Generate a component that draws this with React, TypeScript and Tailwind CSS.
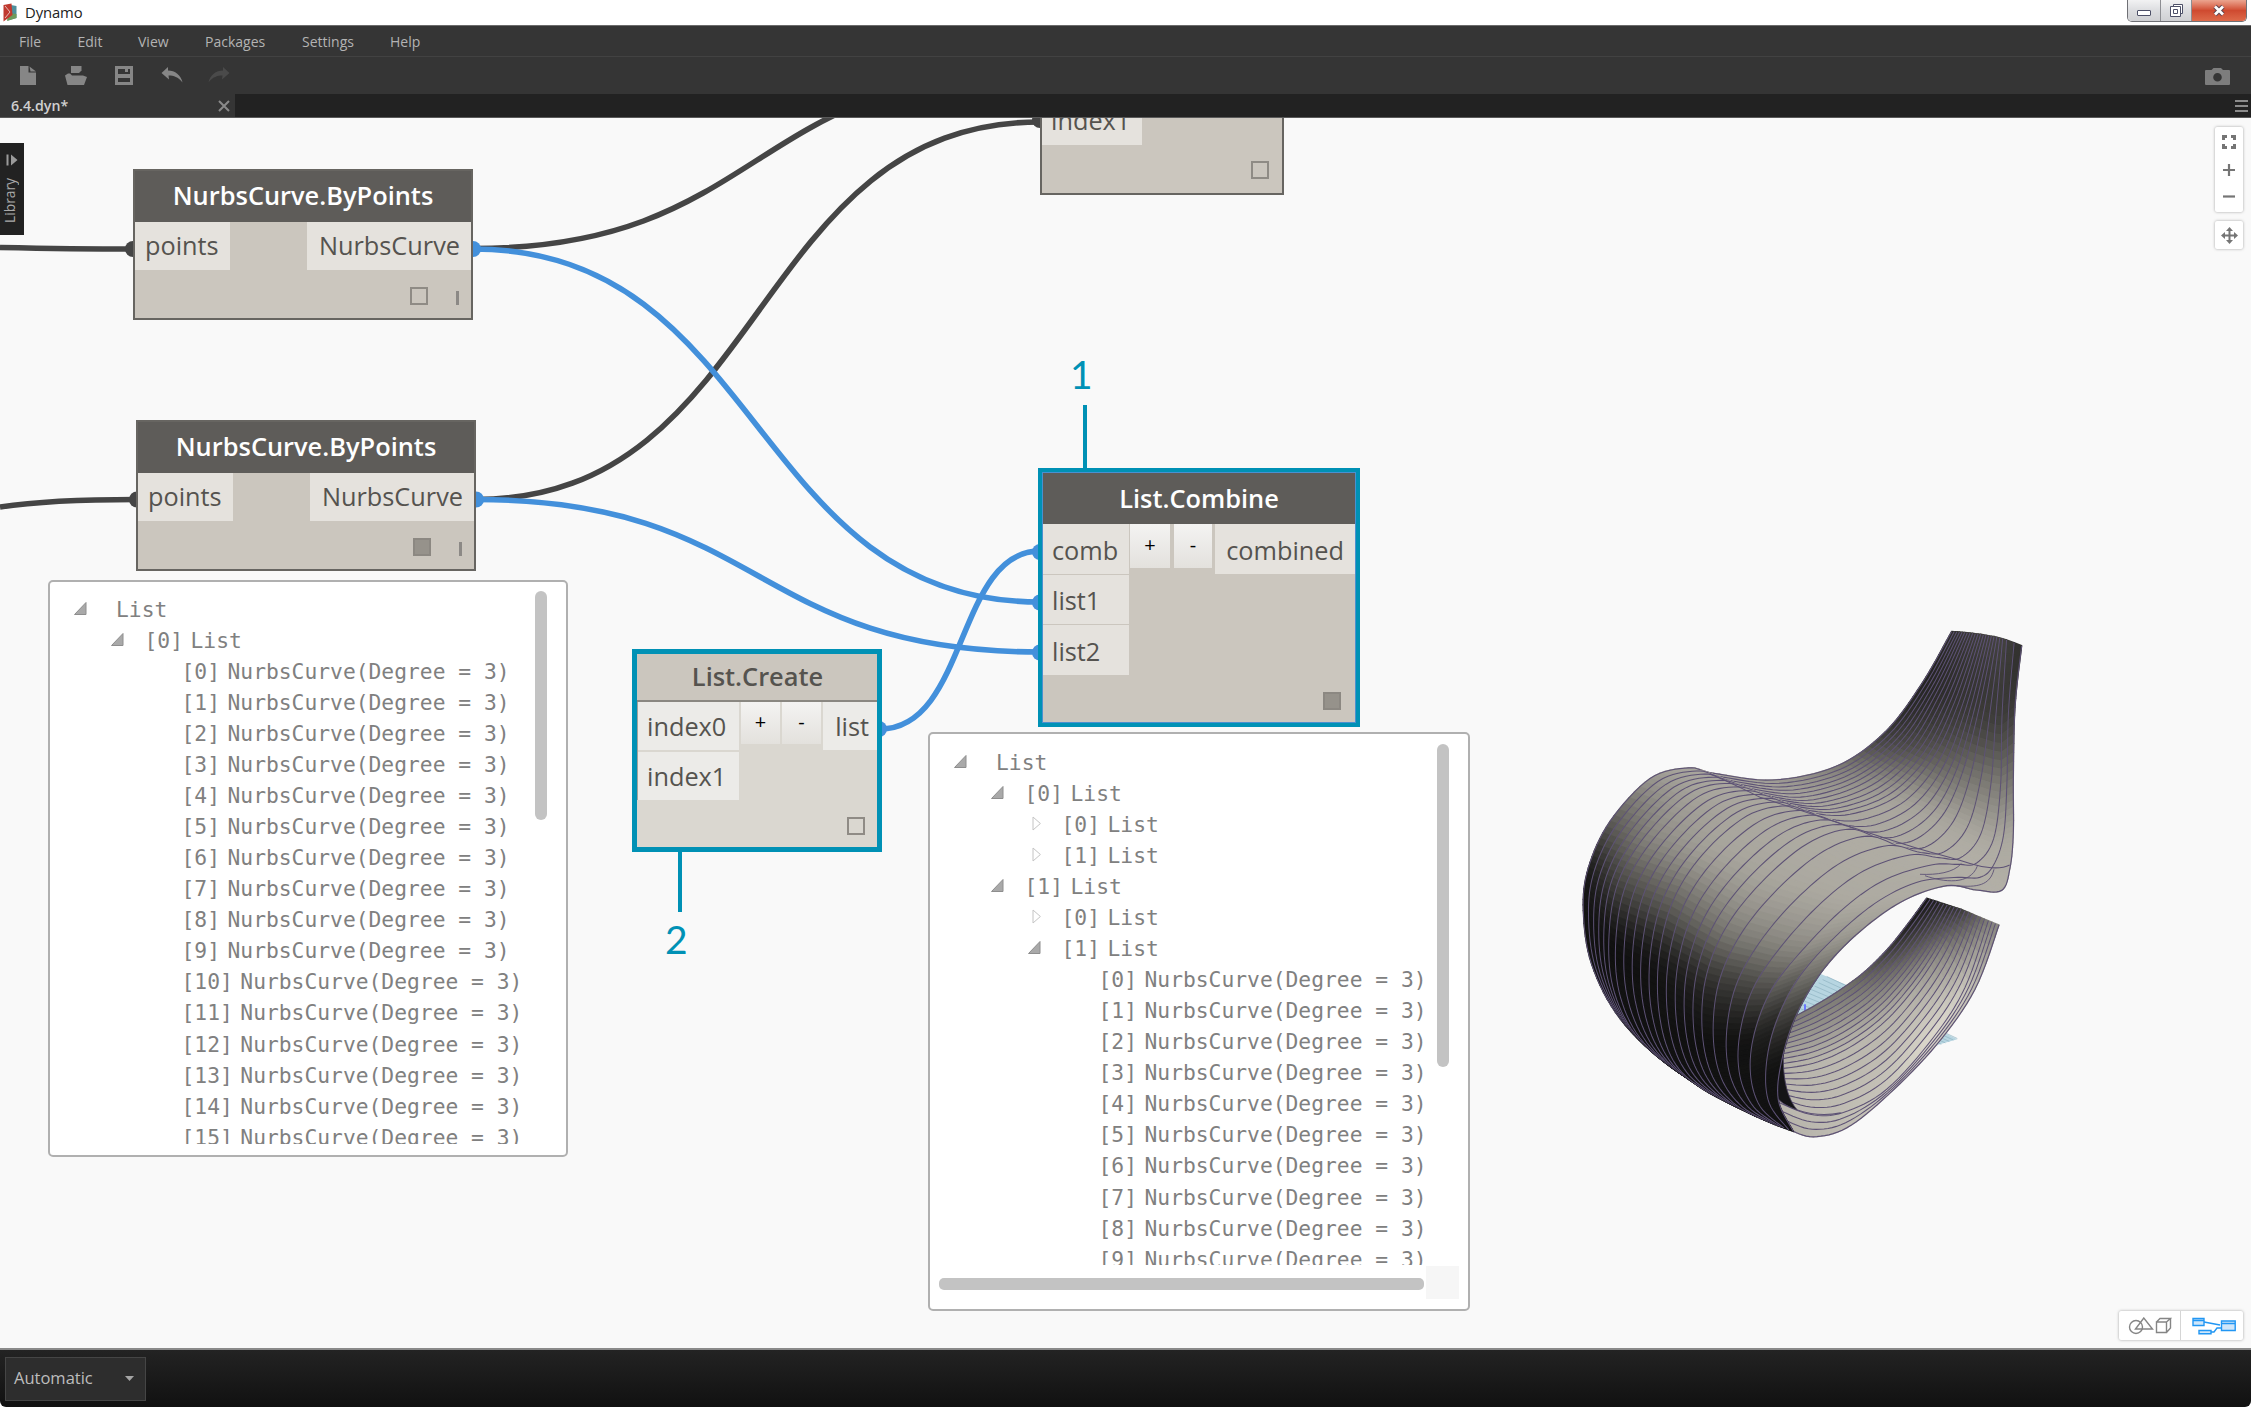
import React from "react";

type Pt = [number, number];
type ShadePt = [number, number, number];
type KeyCurve = { u: number; pts: ShadePt[] };

/* ---------- curved surface preview ---------- */

const OUTER: KeyCurve[] = [
  { u: 0, pts: [[1175, 88, 0.15], [1085, 235, 0.1], [975, 370, 0.2], [830, 465, 0.5], [640, 504, 0.64], [460, 485, 0.7], [385, 470, 0.7], [270, 500, 0.62], [150, 620, 0.34], [85, 750, 0.06], [70, 870, 0.03], [95, 1020, 0.03], [180, 1172, 0.03], [330, 1306, 0.03], [520, 1412, 0.03]] },
  { u: 0.25, pts: [[1218, 91, 0.2], [1135, 260, 0.14], [1040, 405, 0.28], [910, 505, 0.58], [750, 555, 0.68], [620, 545, 0.7], [520, 518, 0.7], [400, 545, 0.68], [270, 660, 0.55], [185, 790, 0.28], [155, 940, 0.03], [165, 1090, 0.02], [230, 1220, 0.02], [360, 1325, 0.02], [550, 1425, 0.02]] },
  { u: 0.5, pts: [[1262, 96, 0.22], [1195, 290, 0.18], [1120, 440, 0.36], [1010, 550, 0.66], [870, 600, 0.7], [760, 597, 0.7], [680, 576, 0.7], [560, 605, 0.7], [430, 710, 0.66], [340, 840, 0.4], [297, 1000, 0.06], [298, 1160, 0.02], [340, 1290, 0.02], [430, 1370, 0.02], [600, 1450, 0.02]] },
  { u: 0.75, pts: [[1306, 103, 0.24], [1262, 310, 0.2], [1215, 490, 0.46], [1160, 610, 0.68], [1080, 680, 0.72], [1000, 685, 0.72], [890, 648, 0.72], [760, 690, 0.72], [620, 800, 0.68], [510, 930, 0.5], [450, 1070, 0.16], [440, 1220, 0.02], [470, 1340, 0.02], [540, 1420, 0.02], [640, 1467, 0.02]] },
  { u: 0.9, pts: [[1335, 110, 0.24], [1322, 330, 0.22], [1318, 520, 0.5], [1295, 670, 0.7], [1240, 735, 0.74], [1180, 733, 0.74], [1100, 735, 0.73], [960, 780, 0.72], [840, 860, 0.7], [715, 980, 0.56], [620, 1095, 0.3], [570, 1220, 0.04], [562, 1330, 0.02], [595, 1420, 0.02], [670, 1478, 0.02]] },
  { u: 1, pts: [[1385, 128, 0.14], [1365, 300, 0.2], [1360, 500, 0.46], [1360, 650, 0.68], [1350, 750, 0.72], [1325, 813, 0.74], [1250, 812, 0.74], [1160, 800, 0.73], [1030, 842, 0.72], [900, 928, 0.66], [790, 1035, 0.5], [710, 1160, 0.26], [665, 1290, 0.04], [655, 1400, 0.02], [700, 1488, 0.02]] },
];

const INNER: KeyCurve[] = [
  { u: 0, pts: [[680, 1178, 0.5], [760, 1138, 0.5], [840, 1092, 0.46], [915, 1040, 0.36], [985, 975, 0.2], [1045, 905, 0.08], [1100, 835, 0.05]] },
  { u: 0.5, pts: [[640, 1315, 0.76], [760, 1297, 0.77], [870, 1252, 0.78], [975, 1180, 0.76], [1065, 1085, 0.7], [1140, 980, 0.52], [1203, 866, 0.2]] },
  { u: 0.85, pts: [[640, 1400, 0.78], [750, 1440, 0.79], [850, 1435, 0.8], [980, 1370, 0.84], [1120, 1225, 0.93], [1215, 1085, 0.84], [1285, 898, 0.5]] },
  { u: 1, pts: [[690, 1484, 0.74], [760, 1503, 0.77], [860, 1478, 0.8], [985, 1385, 0.84], [1130, 1245, 0.86], [1245, 1090, 0.78], [1317, 910, 0.56]] },
];

function curveAt(keys: KeyCurve[], u: number): ShadePt[] {
  let k = 0;
  while (k < keys.length - 2 && u > keys[k + 1].u) k++;
  const a = keys[k];
  const b = keys[k + 1];
  const t = (u - a.u) / (b.u - a.u);
  return a.pts.map((p, i) => p.map((v, j) => v + (b.pts[i][j] - v) * t) as ShadePt);
}

function sample(pts: ShadePt[], per: number): ShadePt[] {
  const out: ShadePt[] = [];
  for (let i = 0; i < pts.length - 1; i++) {
    const p0 = pts[Math.max(0, i - 1)];
    const p1 = pts[i];
    const p2 = pts[i + 1];
    const p3 = pts[Math.min(pts.length - 1, i + 2)];
    for (let s = 0; s < per; s++) {
      const t = s / per;
      out.push(
        [0, 1, 2].map(
          (j) =>
            0.5 *
            (2 * p1[j] +
              (p2[j] - p0[j]) * t +
              (2 * p0[j] - 5 * p1[j] + 4 * p2[j] - p3[j]) * t * t +
              (3 * p1[j] - p0[j] - 3 * p2[j] + p3[j]) * t * t * t),
        ) as ShadePt,
      );
    }
  }
  out.push(pts[pts.length - 1]);
  return out;
}

const tone = (s: number) => {
  const c = Math.max(0, Math.min(1, s));
  return `rgb(${Math.round(14 + 222 * c)},${Math.round(14 + 218 * c)},${Math.round(14 + 206 * c)})`;
};

const line = (pts: (Pt | ShadePt)[]) =>
  "M" + pts.map((p) => `${p[0].toFixed(1)} ${p[1].toFixed(1)}`).join("L");

function Surface({ keys, count, per }: { keys: KeyCurve[]; count: number; per: number }) {
  const curves = Array.from({ length: count + 1 }, (_, i) => sample(curveAt(keys, i / count), per));
  return (
    <g>
      {curves.map((c, i) => (
        <g key={i}>
          {i > 0 &&
            c.slice(1).map((p, j) => {
              const a = curves[i - 1][j];
              const b = curves[i - 1][j + 1];
              const d = c[j];
              const f = tone((a[2] + b[2] + p[2] + d[2]) / 4);
              return (
                <path key={j} d={line([a, b, p, d]) + "Z"} fill={f} stroke={f} strokeWidth={4} strokeLinejoin="round" />
              );
            })}
          {i > 0 && <path d={line(curves[i - 1])} fill="none" stroke="#5d5275" strokeWidth={3} />}
        </g>
      ))}
      <path d={line(curves[count])} fill="none" stroke="#5d5275" strokeWidth={3.4} />
    </g>
  );
}

function ChairModel() {
  return (
    <svg className="absolute left-[1560px] top-[482px] h-[560px] w-[500px]" viewBox="0 0 1500 1568" preserveAspectRatio="none">
      <path d="M760 1038L860 1078L1192 1230L1000 1282L640 1200Z" fill="#b7d5e1" />
      {Array.from({ length: 17 }, (_, i) => (
        <path key={i} d={`M${800 - i * 12} ${1054 + i * 9}L${1192 - i * 12} ${1228 + i * 4}`} stroke="#8fb3c2" strokeWidth={2} />
      ))}
      <path d="M735 1132V1156" stroke="#6a78ff" strokeWidth={6} />
      <Surface keys={INNER} count={20} per={8} />
      <path d="M668 1230C650 1300 648 1360 650 1392C666 1412 690 1420 712 1428C680 1395 664 1330 672 1240Z" fill="#141416" stroke="#4a4160" strokeWidth={2.5} />
      <path d="M712 1428C750 1440 800 1444 842 1436" fill="none" stroke="#5d5275" strokeWidth={3} />
      <Surface keys={OUTER} count={22} per={8} />
      <path d="M450 487C500 505 550 530 600 552C760 600 900 645 1040 686C1120 710 1180 722 1230 738C1270 750 1320 756 1349 742" fill="none" stroke="#5d5275" strokeWidth={3} />
      <path d="M1080 768C1130 770 1180 764 1204 738M1095 772C1150 790 1230 800 1252 745M1190 800C1250 805 1290 800 1302 754" fill="none" stroke="#5d5275" strokeWidth={2.6} />
    </svg>
  );
}

/* ---------- nodes ---------- */

const Port = ({ children, className = "" }: { children: React.ReactNode; className?: string }) => (
  <div className={"flex items-center text-[25.3px] leading-none text-[#55534f] " + className}>{children}</div>
);

const PreviewBox = ({ on = false }: { on?: boolean }) => (
  <span className={"block size-[18px] border-2 " + (on ? "border-[#8c8882] bg-[#96928b]" : "border-[#8f8b85]")} />
);

function CurveNode({ on, className }: { on?: boolean; className: string }) {
  return (
    <div className={"absolute flex h-[151px] w-[340px] flex-col border-2 border-[#676561] bg-[#cbc6be] " + className}>
      <div className="flex h-[51px] items-center justify-center bg-[#5e5c59] pb-[2px] text-[25.4px] font-semibold leading-none text-white">
        NurbsCurve.ByPoints
      </div>
      <div className="flex h-[48px] justify-between">
        <Port className="w-[95px] bg-[#e5e2dd] pl-[10px]">points</Port>
        <Port className="w-[164px] justify-end bg-[#e5e2dd] pr-[11px]">NurbsCurve</Port>
      </div>
      <div className="flex grow items-center justify-end gap-[28px] pr-[12px] pt-[4px]">
        <PreviewBox on={on} />
        <span className="mt-[4px] h-[14px] w-[3px] bg-[#8c8986]" />
      </div>
    </div>
  );
}

const StepButton = ({ children, className = "" }: { children: React.ReactNode; className?: string }) => (
  <div className={"flex items-center justify-center bg-linear-to-b from-[#f4f3f2] to-[#e3e1dd] pb-[2px] text-[20px] leading-none text-black " + className}>
    {children}
  </div>
);

/* ---------- output previews ---------- */

type Row = { depth: number; state?: "open" | "closed"; index?: number; text: string };

const NURBS = "NurbsCurve(Degree = 3)";
const items = (n: number, depth: number): Row[] =>
  Array.from({ length: n }, (_, i) => ({ depth, index: i, text: NURBS }));

const LEFT_ROWS: Row[] = [
  { depth: 0, state: "open", text: "List" },
  { depth: 1, state: "open", index: 0, text: "List" },
  ...items(16, 2),
];
const RIGHT_ROWS: Row[] = [
  { depth: 0, state: "open", text: "List" },
  { depth: 1, state: "open", index: 0, text: "List" },
  { depth: 2, state: "closed", index: 0, text: "List" },
  { depth: 2, state: "closed", index: 1, text: "List" },
  { depth: 1, state: "open", index: 1, text: "List" },
  { depth: 2, state: "closed", index: 0, text: "List" },
  { depth: 2, state: "open", index: 1, text: "List" },
  ...items(10, 3),
];

function Tree({ rows }: { rows: Row[] }) {
  return (
    <div className="pl-[24px] font-['DejaVu_Sans_Mono',monospace] text-[21.3px] text-[#808080]">
      {rows.map((r, i) => (
        <div key={i} className="flex h-[31.06px] items-center whitespace-nowrap leading-none">
          {Array.from({ length: r.depth }, (_, d) => (
            <span key={d} className="w-[37px] shrink-0" />
          ))}
          <svg className="h-[15px] w-[13px] shrink-0" viewBox="0 0 13 15">
            {r.state === "open" && <path d="M0.5 13.5L12 1.5V13.5Z" fill="#a9a9a9" stroke="#8e8e8e" />}
            {r.state === "closed" && <path d="M5 1V14L12.4 7.5Z" fill="#fff" stroke="#c4c4c4" />}
          </svg>
          {r.index === undefined ? (
            <span className="ml-[29px] mt-[2px]">{r.text}</span>
          ) : (
            <>
              <span className="ml-[20.5px] mt-[2px]">[{r.index}]</span>
              <span className="ml-[7.5px] mt-[2px]">{r.text}</span>
            </>
          )}
        </div>
      ))}
    </div>
  );
}

/* ---------- chrome ---------- */

function TitleBar() {
  return (
    <div className="flex h-[25px] shrink-0 items-start justify-between bg-white">
      <div className="flex h-[25px] items-center gap-[8px] pl-[3px]">
        <svg width="14" height="19" viewBox="0 0 14 19">
          <path d="M5 1.5L13.5 3V15L5 17.5Z" fill="#4f8f9c" />
          <path d="M5 10L13.5 11V15L4 18Z" fill="#6f9a5c" />
          <path d="M0.5 2L8.5 0.5L9.5 12L0.5 18.5Z" fill="#c0392f" />
          <path d="M2 3L7 9L2 15" fill="none" stroke="#e6bdb8" />
        </svg>
        <span className="text-[14.8px] tracking-[-0.1px] text-[#222]">Dynamo</span>
      </div>
      <div className="mr-[4px] flex h-[22px] w-[120px] overflow-hidden rounded-b-[5px] border border-t-0 border-[#6f7075]">
        <div className="flex w-[33px] items-center justify-center border-r border-[#8d8e93] bg-linear-to-b from-[#f2f2f3] via-[#dcdde0] to-[#cfd0d3]">
          <span className="mt-[5px] block h-[6px] w-[14px] rounded-[1px] border border-[#4d5068] bg-white" />
        </div>
        <div className="flex w-[31px] items-center justify-center border-r border-[#8d8e93] bg-linear-to-b from-[#f2f2f3] via-[#dcdde0] to-[#cfd0d3]">
          <svg width="15" height="15" viewBox="0 0 15 15" fill="#fff" stroke="#4d5068">
            <path d="M4.5 1.5H13.5V10.5H4.5Z" />
            <path d="M1.5 3.5H11.5V13.5H1.5Z" />
            <path d="M4.5 6.5H8.5V10.5H4.5Z" />
          </svg>
        </div>
        <div className="flex grow items-center justify-center bg-linear-to-b from-[#eba48f] via-[#cf4a30] to-[#dd6a4a]">
          <svg width="14" height="13" viewBox="0 0 14 13">
            <path d="M3 2.5L11 10.5M11 2.5L3 10.5" stroke="#5b4450" strokeWidth="4.6" />
            <path d="M3 2.5L11 10.5M11 2.5L3 10.5" stroke="#fff" strokeWidth="2.8" />
          </svg>
        </div>
      </div>
    </div>
  );
}

function MenuBar() {
  return (
    <div className="flex h-[32px] shrink-0 items-center border-b border-t border-b-[#424242] border-t-[#6b6b6b] bg-[#353535] pl-[19px] pt-px text-[14px] text-[#b3b3b3]">
      <span className="w-[58.5px]">File</span>
      <span className="w-[60.5px]">Edit</span>
      <span className="w-[67px]">View</span>
      <span className="w-[97px]">Packages</span>
      <span className="w-[88px]">Settings</span>
      <span>Help</span>
    </div>
  );
}

function ToolBar() {
  return (
    <div className="flex h-[37px] shrink-0 items-center justify-between bg-[#353535] pl-[20px] pr-[21px]">
      <svg width="212" height="22" viewBox="20 65 212 22" fill="#868686">
        <path d="M20 66H28.5V72.5H36V85H20Z" />
        <path d="M29.5 66.5L36 71.5H30.5Z" />
        <path d="M71 66H81.5V70.5L79 73H71Z" />
        <path d="M65 75.5L68 73.5H70L72 75.5H83L87 77L84 85H67.5Z" />
        <path fillRule="evenodd" d="M115 66H133V85H115ZM118 69V74H130V69ZM118 78V82H130V78Z" />
        <path d="M125 68H128V72H125Z" />
        <path d="M161.5 73L168 67V70.5C175 70.5 181 75 182.5 82.5C178 77 174 75.5 168.5 75.5L169 79.5Z" />
        <path d="M229.5 73L223 67V70.5C216 70.5 210 75 208.5 82.5C213 77 217 75.5 222.5 75.5L222 79.5Z" fill="#4a4a4a" />
      </svg>
      <svg width="25" height="17" viewBox="0 0 25 17" fill="#7d7d7d" className="mt-[2px]">
        <path fillRule="evenodd" d="M1 2H6.5L8.5 0H16L18 2H24Q25 2 25 3V16Q25 17 24 17H1Q0 17 0 16V3Q0 2 1 2ZM12.5 5A4.3 4.3 0 1 0 12.501 13.6A4.3 4.3 0 1 0 12.5 5Z" />
      </svg>
    </div>
  );
}

function TabStrip() {
  return (
    <div className="flex h-[24px] shrink-0 justify-between border-b border-[#5a5a5a] bg-[#222]">
      <div className="flex w-[235px] items-center justify-between bg-[#353535] pl-[11px] pr-[5px]">
        <span className="text-[14.2px] font-semibold text-[#d0d0d0]">6.4.dyn*</span>
        <svg width="12" height="12" viewBox="0 0 12 12" stroke="#8a8a8a" strokeWidth="2">
          <path d="M1 1L11 11M11 1L1 11" />
        </svg>
      </div>
      <div className="mr-[3px] flex w-[13px] flex-col justify-center gap-[3px]">
        <span className="h-[2px] bg-[#8b8b8b]" />
        <span className="h-[2px] bg-[#8b8b8b]" />
        <span className="h-[2px] bg-[#8b8b8b]" />
      </div>
    </div>
  );
}

function Wires() {
  return (
    <svg className="absolute inset-0 h-full w-full" viewBox="0 118 2251 1230" fill="none" strokeWidth="5.6">
      <g stroke="#454545">
        <path d="M0 247.5C50 248.5 90 249 133 249" />
        <path d="M0 507C40 501 90 499.5 136 499.5" />
        <path d="M473 248.5C764 248.5 749 72.5 1040 72.5" />
        <path d="M476 499.5C768 499.5 750 122 1040 122" />
      </g>
      <g fill="#454545">
        <circle cx="133" cy="249" r="8" />
        <circle cx="137" cy="499.5" r="8" />
        <circle cx="1040" cy="120" r="8" />
      </g>
      <g stroke="#4390db">
        <path d="M473 249C764 249 750 602 1040 602" />
        <path d="M476 499.5C766 499.5 750 652 1040 652" />
        <path d="M880 729C968 729 956 551 1040 551" />
      </g>
      <g fill="#4390db">
        <circle cx="473" cy="249" r="8" />
        <circle cx="476" cy="499.5" r="8" />
        <circle cx="879" cy="729" r="8" />
        <circle cx="1040" cy="552" r="8" />
        <circle cx="1040" cy="602.5" r="8" />
        <circle cx="1040" cy="652.5" r="8" />
      </g>
    </svg>
  );
}

function ViewControls() {
  return (
    <div className="absolute right-[8px] top-[9px] flex w-[28px] flex-col gap-[9px]">
      <div className="flex h-[85px] flex-col items-center rounded-[2px] bg-white pt-[8px] shadow-[0_0_3px_rgba(0,0,0,0.35)]">
        <svg width="14" height="14" viewBox="0 0 14 14" fill="none" stroke="#757575" strokeWidth="3">
          <path d="M1.5 5V1.5H5M9 1.5H12.5V5M12.5 9V12.5H9M5 12.5H1.5V9" />
        </svg>
        <svg width="12" height="12" viewBox="0 0 12 12" stroke="#757575" strokeWidth="2.2" className="mt-[15px]">
          <path d="M6 0V12M0 6H12" />
        </svg>
        <svg width="12" height="5" viewBox="0 0 12 5" stroke="#757575" strokeWidth="2.2" className="mt-[18px]">
          <path d="M0 2.5H12" />
        </svg>
      </div>
      <div className="flex h-[28px] items-center justify-center rounded-[2px] bg-white shadow-[0_0_3px_rgba(0,0,0,0.35)]">
        <svg width="17" height="17" viewBox="0 0 17 17" fill="#757575">
          <path d="M8.5 0L12 4H9.5V7.5H13V5L17 8.5L13 12V9.5H9.5V13H12L8.5 17L5 13H7.5V9.5H4V12L0 8.5L4 5V7.5H7.5V4H5Z" />
        </svg>
      </div>
    </div>
  );
}

function ViewToggle() {
  return (
    <div className="absolute bottom-[8px] right-[8px] flex h-[29px] w-[124px] rounded-[2px] bg-white shadow-[0_0_3px_rgba(0,0,0,0.35)]">
      <div className="flex w-[62px] items-center justify-center border-r border-[#d5d5d5]">
        <svg width="44" height="18" viewBox="0 0 44 18" fill="none" stroke="#858585" strokeWidth="1.4">
          <circle cx="8" cy="10" r="6.5" />
          <path d="M7.5 12L15.8 1L24.5 12Z" />
          <path d="M28.5 5H38.5V15.5H28.5ZM28.5 5L32 1.5H42.5L38.5 5M42.5 1.5V11L38.5 15.5" />
        </svg>
      </div>
      <div className="flex w-[62px] items-center justify-center pl-[3px]">
        <svg width="44" height="18" viewBox="0 0 44 18" fill="#cfe6fa" stroke="#2196f3" strokeWidth="1.4">
          <path d="M12 5L28 8M19 15H22L25 11H29" fill="none" />
          <path d="M1 1.5H12V8.5H1ZM1 3.5H12" />
          <path d="M29.5 4H43.2V13.5H29.5ZM29.5 6.5H43.2" />
          <path d="M7 13.5H19V16.8H7Z" />
        </svg>
      </div>
    </div>
  );
}

function Workspace() {
  return (
    <div className="relative h-[1230px] shrink-0 overflow-hidden bg-[#f9f9f9]">
      <ChairModel />
      <Wires />

      <div className="absolute left-0 top-[25px] flex h-[92px] w-[23.5px] flex-col items-center bg-[#222] pt-[11px]">
        <svg width="12" height="12" viewBox="0 0 12 12" fill="#9a9a9a" className="shrink-0">
          <path d="M0.5 0.5H2.5V11.5H0.5ZM5 0.5L11.5 6L5 11.5Z" />
        </svg>
        <span className="mr-[3px] mt-[12px] rotate-180 text-[13.8px] leading-[20px] text-[#aaa] [writing-mode:vertical-rl]">Library</span>
      </div>

      <CurveNode className="left-[133px] top-[51px]" />
      <CurveNode className="left-[136px] top-[302px]" on />

      <div className="absolute left-[1040px] top-[-54px] flex h-[131px] w-[244px] flex-col justify-end border-2 border-[#676561] bg-[#cbc6be]">
        <Port className="h-[48px] w-[100px] bg-[#e5e2dd] pl-[9px]">index1</Port>
        <div className="flex h-[48px] items-center justify-end pr-[13px] pt-px">
          <PreviewBox />
        </div>
      </div>

      <div className="absolute left-[632px] top-[531px] flex h-[203px] w-[250px] flex-col border-[5px] border-[#0091b5] bg-[#dad7d0]">
        <div className="flex h-[48px] shrink-0 items-center justify-center border-b-2 border-[#8a8781] bg-[#cbc6be] pl-px text-[25.4px] font-semibold leading-none text-[#55534f]">
          List.Create
        </div>
        <div className="flex items-start justify-between border-l border-[#a5a19a]">
          <div className="flex w-[101px] flex-col gap-[2px]">
            <Port className="h-[48px] bg-[#ecebe8] pl-[9px] pt-[2px]">index0</Port>
            <Port className="h-[48px] bg-[#ecebe8] pl-[9px] pt-[2px]">index1</Port>
          </div>
          <StepButton className="h-[42px] w-[39px]">+</StepButton>
          <StepButton className="h-[42px] w-[39px]">-</StepButton>
          <Port className="h-[48px] w-[54px] justify-end bg-[#ecebe8] pr-[8px] pt-[2px]">list</Port>
        </div>
        <div className="flex grow items-center justify-end pr-[12px] pt-[5px]">
          <PreviewBox />
        </div>
      </div>

      <div className="absolute left-[1083px] top-[287px] h-[64px] w-[4px] bg-[#0091b5]" />
      <div className="absolute left-[1070px] top-[233px] font-['Lato',sans-serif] text-[39px] leading-[46px] text-[#0091b5]">1</div>
      <div className="absolute left-[678px] top-[734px] h-[60px] w-[4px] bg-[#0091b5]" />
      <div className="absolute left-[665px] top-[798px] font-['Lato',sans-serif] text-[39px] leading-[46px] text-[#0091b5]">2</div>

      <div className="absolute left-[1038px] top-[350px] flex h-[259px] w-[322px] flex-col border-4 border-[#0091b5] bg-[#cbc6be]">
        <div className="flex grow flex-col border border-[#4a90d0]">
          <div className="flex h-[51px] items-center justify-center bg-[#5e5c59] text-[25.4px] font-semibold leading-none text-white">
            List.Combine
          </div>
          <div className="flex items-start">
            <div className="flex w-[86px] flex-col gap-px">
              <Port className="h-[49.5px] bg-[#e5e2dd] pl-[9px] pt-[3px]">comb</Port>
              <Port className="h-[49.5px] bg-[#e5e2dd] pl-[9px] pt-[3px]">list1</Port>
              <Port className="h-[49.5px] bg-[#e5e2dd] pl-[9px] pt-[3px]">list2</Port>
            </div>
            <StepButton className="ml-px h-[44px] w-[40px]">+</StepButton>
            <StepButton className="ml-[4px] h-[44px] w-[38px]">-</StepButton>
            <Port className="ml-[3px] h-[49.5px] grow justify-end bg-[#e5e2dd] pr-[11px] pt-[3px]">combined</Port>
          </div>
          <div className="flex grow items-center justify-end pr-[14px] pt-[5px]">
            <PreviewBox on />
          </div>
        </div>
      </div>

      <div className="absolute left-[48px] top-[462px] flex h-[577px] w-[520px] justify-between rounded-[5px] border-2 border-[#b0b0b0] bg-white pr-[19px] pt-[11px]">
        <div className="h-[551px] overflow-hidden">
          <Tree rows={LEFT_ROWS} />
        </div>
        <div className="-mt-[2px] h-[229px] w-[12px] rounded-full bg-[#c3c3c3]" />
      </div>

      <div className="absolute left-[928px] top-[614px] flex h-[579px] w-[542px] flex-col rounded-[5px] border-2 border-[#b0b0b0] bg-white pt-[12px]">
        <div className="flex h-[519px] justify-between pr-[19px]">
          <div className="overflow-hidden">
            <Tree rows={RIGHT_ROWS} />
          </div>
          <div className="-mt-[2px] h-[323px] w-[12px] rounded-full bg-[#c3c3c3]" />
        </div>
        <div className="flex items-start gap-[2px] pl-[9px]">
          <div className="mt-[13px] h-[12px] w-[485px] rounded-[5px] bg-[#c3c3c3]" />
          <div className="mt-px size-[33px] bg-[#f6f6f6]" />
        </div>
      </div>

      <ViewControls />
      <ViewToggle />
    </div>
  );
}

export default function App() {
  return (
    <div className="flex h-[1408px] w-[2251px] flex-col overflow-hidden bg-white font-['Open_Sans',sans-serif]">
      <TitleBar />
      <MenuBar />
      <ToolBar />
      <TabStrip />
      <Workspace />
      <div className="flex h-[59px] shrink-0 items-center rounded-b-[6px] border-t-2 border-[#8a8a8a] bg-linear-to-b from-[#232323] to-[#111] pl-[5px]">
        <div className="flex h-[44px] w-[141px] items-center justify-between border border-[#454545] bg-[#2d2d2d] pl-[8px] pr-[11px]">
          <span className="text-[16.5px] text-[#bdbdbd]">Automatic</span>
          <svg width="9" height="5" viewBox="0 0 9 5" fill="#a5a5a5">
            <path d="M0 0H9L4.5 5Z" />
          </svg>
        </div>
      </div>
    </div>
  );
}
